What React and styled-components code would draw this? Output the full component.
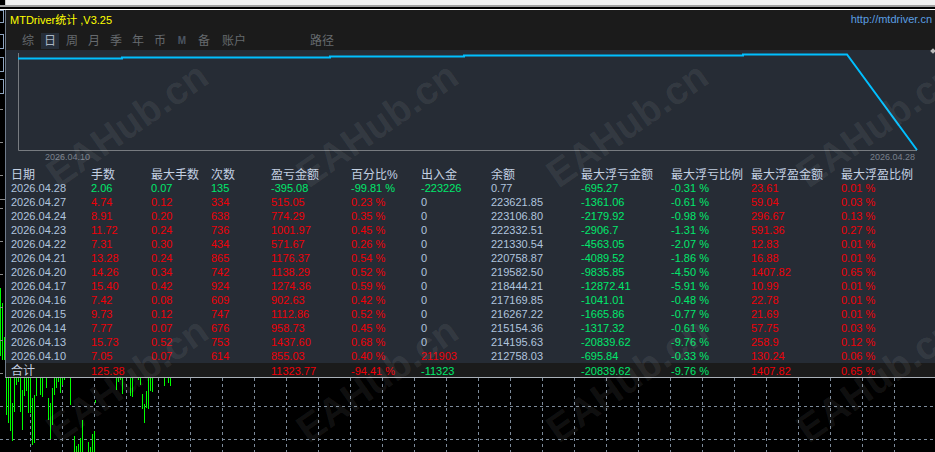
import React from "react";
import styled, { createGlobalStyle } from "styled-components";

const GlobalStyle = createGlobalStyle`
  html, body {
    margin: 0;
    padding: 0;
    background: #000;
  }
  body {
    width: 935px;
    height: 452px;
    overflow: hidden;
    font-family: "Liberation Sans", "Noto Sans CJK SC", sans-serif;
  }
`;

const tones = {
  red: "#ee0008",
  green: "#00e86c",
  steel: "#b0c4de",
};

const Page = styled.div`
  width: 935px;
  height: 452px;
  display: flex;
  flex-direction: column;
  overflow: hidden;
`;

const WindowStrip = styled.div`
  height: 5px;
  background: #f0f0f0;
  border-left: 1px solid #c8c8c8;
  margin-left: 5px;
`;

const WindowEdge = styled.div`
  height: 2px;
  background: #a0a0a0;
`;

const WindowGap = styled.div`
  height: 2px;
  background: #000;
`;

const WhiteLine = styled.div`
  height: 1px;
  background: #fff;
`;

const Terminal = styled.div`
  position: relative;
  flex: 1;
  background: #000;
`;

const BackChart = styled.svg`
  position: absolute;
  left: 0;
  top: 0;
  display: block;
`;

const Panel = styled.div`
  position: relative;
  margin-left: 5px;
  height: 367px;
  display: flex;
  flex-direction: column;
  background: #262c35;
  border-left: 1px solid #6f7b8a;
  border-bottom: 1px solid #aab0b8;
  box-sizing: content-box;
`;

const Header = styled.div`
  height: 40px;
  background: #1b1b1b;
  display: flex;
  flex-direction: column;
`;

const TitleRow = styled.div`
  height: 18px;
  display: flex;
  align-items: center;
  justify-content: space-between;
  padding: 0 3px 0 4px;
`;

const Title = styled.span`
  color: #ffff00;
  font-size: 11px;
`;

const SiteLink = styled.span`
  color: #5a9ee2;
  font-size: 11px;
`;

const TabRow = styled.div`
  height: 17px;
  display: flex;
  align-items: flex-start;
  padding: 5px 0 0 11px;
`;

const Tab = styled.span`
  box-sizing: border-box;
  flex: none;
  width: ${(p) => p.$width || 22}px;
  height: 16px;
  margin-left: ${(p) => p.$gap || 0}px;
  padding: 0 2px;
  line-height: 16px;
  text-align: center;
  border-radius: 2px;
  background-clip: content-box;
  color: ${(p) => (p.$active ? "#a9b5c4" : p.$dim ? "#4c5663" : "#666a6e")};
  background-color: ${(p) => (p.$active ? "#262e39" : "transparent")};
  font-weight: ${(p) => (p.$dim ? 700 : 400)};
  font-size: ${(p) => (p.$dim ? 10 : 12)}px;
`;

const EquityChart = styled.svg`
  display: block;
  height: 102px;
  flex: none;
`;

const DateRange = styled.div`
  height: 15px;
  display: flex;
  justify-content: space-between;
  padding: 0 20px 0 39px;
  font-size: 9px;
  line-height: 10px;
  color: #7a818c;
`;

const Table = styled.div`
  display: flex;
  flex-direction: column;
  flex: 1;
`;

const Row = styled.div`
  height: 14px;
  display: grid;
  grid-template-columns: 80px 60px 60px 60px 80px 70px 70px 90px 90px 80px 90px 1fr;
  padding-left: 5px;
  line-height: 14px;
  white-space: nowrap;
  font-size: 11px;
`;

const ColumnRow = styled(Row)`
  font-size: 12px;
  line-height: 16px;
  color: #c3d0e2;
`;

const TotalRow = styled(Row)`
  background: #1b1b1b;
  margin-top: auto;
  line-height: 16px;
`;

const TotalLabel = styled.span`
  font-size: 12px;
  color: #c3d0e2;
`;

const Cell = styled.span`
  color: ${(p) => tones[p.$tone]};
`;

const Handle = styled.div`
  position: absolute;
  right: 0;
  top: 39px;
  width: 4px;
  height: 4px;
  background: #b8b8b8;
  transform: rotate(45deg);
`;

const Watermarks = styled.div`
  position: absolute;
  left: 2px;
  top: -13px;
  width: 933px;
  height: 455px;
  display: grid;
  grid-template-columns: repeat(4, 250px);
  grid-auto-rows: 255px;
  overflow: hidden;
  pointer-events: none;
`;

const Watermark = styled.div`
  display: flex;
  align-items: center;
  justify-content: center;
  font-size: 39px;
  font-weight: 700;
  white-space: nowrap;
  color: rgba(255, 255, 255, 0.075);
  transform: rotate(-35deg);
`;

const columns = [
  "日期", "手数", "最大手数", "次数", "盈亏金额", "百分比%", "出入金", "余额",
  "最大浮亏金额", "最大浮亏比例", "最大浮盈金额", "最大浮盈比例",
];

const days = [
  ["2026.04.28", "2.06", "0.07", "135", "-395.08", "-99.81 %", "-223226", "0.77", "-695.27", "-0.31 %", "23.61", "0.01 %"],
  ["2026.04.27", "4.74", "0.12", "334", "515.05", "0.23 %", "0", "223621.85", "-1361.06", "-0.61 %", "59.04", "0.03 %"],
  ["2026.04.24", "8.91", "0.20", "638", "774.29", "0.35 %", "0", "223106.80", "-2179.92", "-0.98 %", "296.67", "0.13 %"],
  ["2026.04.23", "11.72", "0.24", "736", "1001.97", "0.45 %", "0", "222332.51", "-2906.7", "-1.31 %", "591.36", "0.27 %"],
  ["2026.04.22", "7.31", "0.30", "434", "571.67", "0.26 %", "0", "221330.54", "-4563.05", "-2.07 %", "12.83", "0.01 %"],
  ["2026.04.21", "13.28", "0.24", "865", "1176.37", "0.54 %", "0", "220758.87", "-4089.52", "-1.86 %", "16.88", "0.01 %"],
  ["2026.04.20", "14.26", "0.34", "742", "1138.29", "0.52 %", "0", "219582.50", "-9835.85", "-4.50 %", "1407.82", "0.65 %"],
  ["2026.04.17", "15.40", "0.42", "924", "1274.36", "0.59 %", "0", "218444.21", "-12872.41", "-5.91 %", "10.99", "0.01 %"],
  ["2026.04.16", "7.42", "0.08", "609", "902.63", "0.42 %", "0", "217169.85", "-1041.01", "-0.48 %", "22.78", "0.01 %"],
  ["2026.04.15", "9.73", "0.12", "747", "1112.86", "0.52 %", "0", "216267.22", "-1665.86", "-0.77 %", "21.69", "0.01 %"],
  ["2026.04.14", "7.77", "0.07", "676", "958.73", "0.45 %", "0", "215154.36", "-1317.32", "-0.61 %", "57.75", "0.03 %"],
  ["2026.04.13", "15.73", "0.52", "753", "1437.60", "0.68 %", "0", "214195.63", "-20839.62", "-9.76 %", "258.9", "0.12 %"],
  ["2026.04.10", "7.05", "0.07", "614", "855.03", "0.40 %", "211903", "212758.03", "-695.84", "-0.33 %", "130.24", "0.06 %"],
];

const tabs = [
  { label: "综" },
  { label: "日", active: true },
  { label: "周" },
  { label: "月" },
  { label: "季" },
  { label: "年" },
  { label: "币" },
  { label: "M", dim: true },
  { label: "备" },
  { label: "账户", width: 38 },
  { label: "路径", width: 28, gap: 55 },
];

// x, top, bottom of each green bar of the chart behind the panel
const bars = [
  [0, 288, 356], [2, 303, 360], [4, 337, 360],
  [6, 378, 415], [8, 378, 423], [10, 378, 431], [12, 403, 441], [14, 378, 412],
  [16, 378, 385], [18, 378, 382], [20, 378, 412], [22, 390, 430], [24, 378, 396],
  [26, 378, 391], [28, 378, 413], [30, 378, 413], [32, 398, 445], [34, 395, 443],
  [36, 378, 396], [40, 378, 395], [42, 378, 397], [46, 378, 388], [48, 398, 420],
  [50, 403, 439], [52, 388, 425], [54, 378, 395], [56, 378, 388], [58, 378, 382],
  [60, 378, 393], [62, 378, 385], [64, 378, 380], [70, 378, 405],
  [74, 436, 452], [76, 446, 452], [78, 444, 452], [80, 438, 452], [82, 420, 452],
  [88, 442, 452], [90, 447, 452], [92, 434, 452], [94, 431, 452], [95, 400, 403],
  [116, 378, 390], [118, 378, 382], [120, 378, 380], [122, 378, 394],
  [130, 378, 396], [132, 378, 397], [138, 378, 380], [140, 378, 385],
  [142, 394, 409], [144, 404, 423], [146, 391, 408], [148, 378, 409],
  [150, 378, 391], [152, 378, 392], [164, 378, 386], [168, 378, 383], [170, 378, 386],
];

const verticalGrid = Array.from({ length: 28 }, (_, i) => 30.5 + i * 32);

export default function App() {
  return (
    <Page>
      <GlobalStyle />
      <WindowStrip />
      <WindowEdge />
      <WindowGap />
      <WhiteLine />
      <Terminal>
        <BackChart width="935" height="442" viewBox="0 10 935 442">
          {verticalGrid.map((x) => (
            <line key={x} x1={x} y1="378" x2={x} y2="452" stroke="#7d8b9a" strokeDasharray="3 3" />
          ))}
          {[406.5, 439.5].map((y) => (
            <line key={y} x1="0" y1={y} x2="935" y2={y} stroke="#7d8b9a" strokeDasharray="3 3" />
          ))}
          {bars.map(([x, top, bottom]) => (
            <rect key={`${x}-${top}`} x={x} y={top} width="1" height={bottom - top} fill="#00ff00" />
          ))}
          {[[10, 12], [34, 14], [57, 14], [79, 14]].map(([y, h]) => (
            <rect key={y} x="-2" y={y + 0.5} width="5.5" height={h} fill="none" stroke="#8fa5c0" />
          ))}
          {[109, 142, 175, 208, 241, 274, 307, 340, 373].map((y) => (
            <line key={y} x1="0" y1={y + 0.5} x2="3" y2={y + 0.5} stroke="#8b8b8b" />
          ))}
          <line x1="0" y1="199.5" x2="5" y2="199.5" stroke="#8b8b8b" />
        </BackChart>
        <Panel>
          <Header>
            <TitleRow>
              <Title>MTDriver统计 ,V3.25</Title>
              <SiteLink>http://mtdriver.cn</SiteLink>
            </TitleRow>
            <TabRow>
              {tabs.map((tab) => (
                <Tab key={tab.label} $active={tab.active} $dim={tab.dim} $width={tab.width} $gap={tab.gap}>
                  {tab.label}
                </Tab>
              ))}
            </TabRow>
          </Header>
          <EquityChart width="929" viewBox="6 50 929 102">
            <path d="M18.5 53V150.5H917" fill="none" stroke="#777b80" />
            <path
              d="M18 58.5H122V57.5H330V56.5H464V55.5H743V54.5H847L917 150"
              fill="none"
              stroke="#00bfff"
              strokeWidth="2"
            />
          </EquityChart>
          <DateRange>
            <span>2026.04.10</span>
            <span>2026.04.28</span>
          </DateRange>
          <Table>
            <ColumnRow>
              {columns.map((name) => (
                <span key={name}>{name}</span>
              ))}
            </ColumnRow>
            {days.map((day, i) => {
              const flow = Number(day[6]);
              const flowTone = flow > 0 ? "red" : flow < 0 ? "green" : "steel";
              const first = i === 0 ? "green" : "red";
              const rowTones = ["steel", first, first, first, first, first, flowTone, "steel", "green", "green", "red", "red"];
              return (
                <Row key={day[0]}>
                  {day.map((value, c) => (
                    <Cell key={c} $tone={rowTones[c]}>{value}</Cell>
                  ))}
                </Row>
              );
            })}
            <TotalRow>
              <TotalLabel>合计</TotalLabel>
              <Cell $tone="red">125.38</Cell>
              <span />
              <span />
              <Cell $tone="red">11323.77</Cell>
              <Cell $tone="red">-94.41 %</Cell>
              <Cell $tone="green">-11323</Cell>
              <span />
              <Cell $tone="green">-20839.62</Cell>
              <Cell $tone="green">-9.76 %</Cell>
              <Cell $tone="red">1407.82</Cell>
              <Cell $tone="red">0.65 %</Cell>
            </TotalRow>
          </Table>
          <Handle />
        </Panel>
        <Watermarks>
          {Array.from({ length: 8 }, (_, i) => (
            <Watermark key={i}>EAHub.cn</Watermark>
          ))}
        </Watermarks>
      </Terminal>
    </Page>
  );
}
